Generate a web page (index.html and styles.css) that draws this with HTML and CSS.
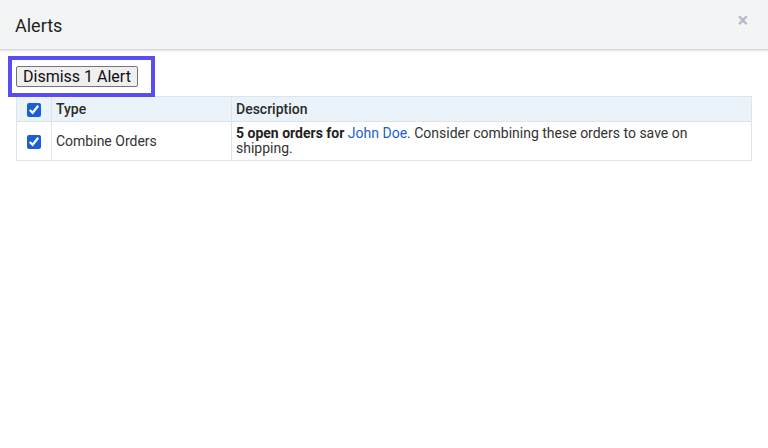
FILE: index.html
```html
<!DOCTYPE html>
<html lang="en">
<head>
    <meta charset="UTF-8">
    <meta name="viewport" content="width=device-width, initial-scale=1.0">
    <title>Alerts</title>
    <link rel="stylesheet" href="styles.css">
</head>
<body>
    <div class="modal">
        <header class="modal-header">
            <h1>Alerts</h1>
            <span class="close-btn">&times;</span>
        </header>
        <div class="modal-body">
            <div class="toolbar">
                <span class="highlight">
                    <button type="button">Dismiss 1 Alert</button>
                </span>
            </div>
            <table class="alerts-table">
                <thead>
                    <tr>
                        <th class="check-col"><input type="checkbox" checked></th>
                        <th class="type-col">Type</th>
                        <th>Description</th>
                    </tr>
                </thead>
                <tbody>
                    <tr>
                        <td class="check-col"><input type="checkbox" checked></td>
                        <td class="type-col">Combine Orders</td>
                        <td><strong>5 open orders for</strong> <a href="#">John Doe</a>. Consider combining these orders to save on shipping.</td>
                    </tr>
                </tbody>
            </table>
        </div>
    </div>
</body>
</html>
```

FILE: styles.css
```css
body {
    margin: 0;
    padding: 0;
    font-family: 'Roboto', 'Liberation Sans', sans-serif;
    background-color: #fff;
    color: #222;
    width: 768px;
    height: 448px;
    overflow: hidden;
}

.modal-header {
    height: 49px;
    display: flex;
    align-items: center;
    justify-content: space-between;
    padding: 0 20px 0 15px;
    background-color: #f3f4f6;
    border-bottom: 1px solid #d4d6d9;
    box-shadow: 0 1px 2px rgba(0, 0, 0, 0.12);
}

.modal-header h1 {
    margin: 0;
    font-size: 18px;
    font-weight: 400;
    color: #1f1f1f;
    padding-top: 1px;
}

.close-btn {
    font-size: 20px;
    font-weight: 700;
    color: #b3bcc6;
    line-height: 1;
    margin-top: -9px;
}

.modal-body {
    padding: 16px 16px 0 16px;
}

.toolbar {
    height: 30px;
}

.highlight {
    position: relative;
    display: inline-block;
}

.highlight::after {
    content: "";
    position: absolute;
    top: -10px;
    left: -8px;
    right: -17px;
    bottom: -10px;
    border: 4.5px solid #5a4cf3;
    pointer-events: none;
}

.highlight button {
    display: block;
    font-family: 'Roboto', 'Liberation Sans', sans-serif;
    font-size: 16px;
    line-height: 19px;
    padding: 0 6px;
    height: 21px;
    color: #111;
    background-color: #efefef;
    border: 1px solid #767676;
    border-radius: 2px;
}

.alerts-table {
    width: 736px;
    border-collapse: collapse;
    font-size: 14px;
    color: #333;
}

.alerts-table th,
.alerts-table td {
    border: 1px solid #dfe4e8;
    text-align: left;
    vertical-align: middle;
    padding: 0 4px;
}

.alerts-table th {
    height: 24px;
    background-color: #eaf3f9;
    font-weight: 500;
    color: #2b2b2b;
}

.alerts-table td {
    height: 38px;
    line-height: 15px;
}

.alerts-table .check-col {
    width: 26px;
    text-align: center;
}

.alerts-table .type-col {
    width: 171px;
}

.alerts-table input {
    margin: 0;
    width: 14px;
    height: 14px;
    accent-color: #1a5fd8;
    vertical-align: middle;
}

.alerts-table strong {
    font-weight: 700;
    color: #222;
}

.alerts-table a {
    color: #1a5fd8;
    text-decoration: none;
}
```
